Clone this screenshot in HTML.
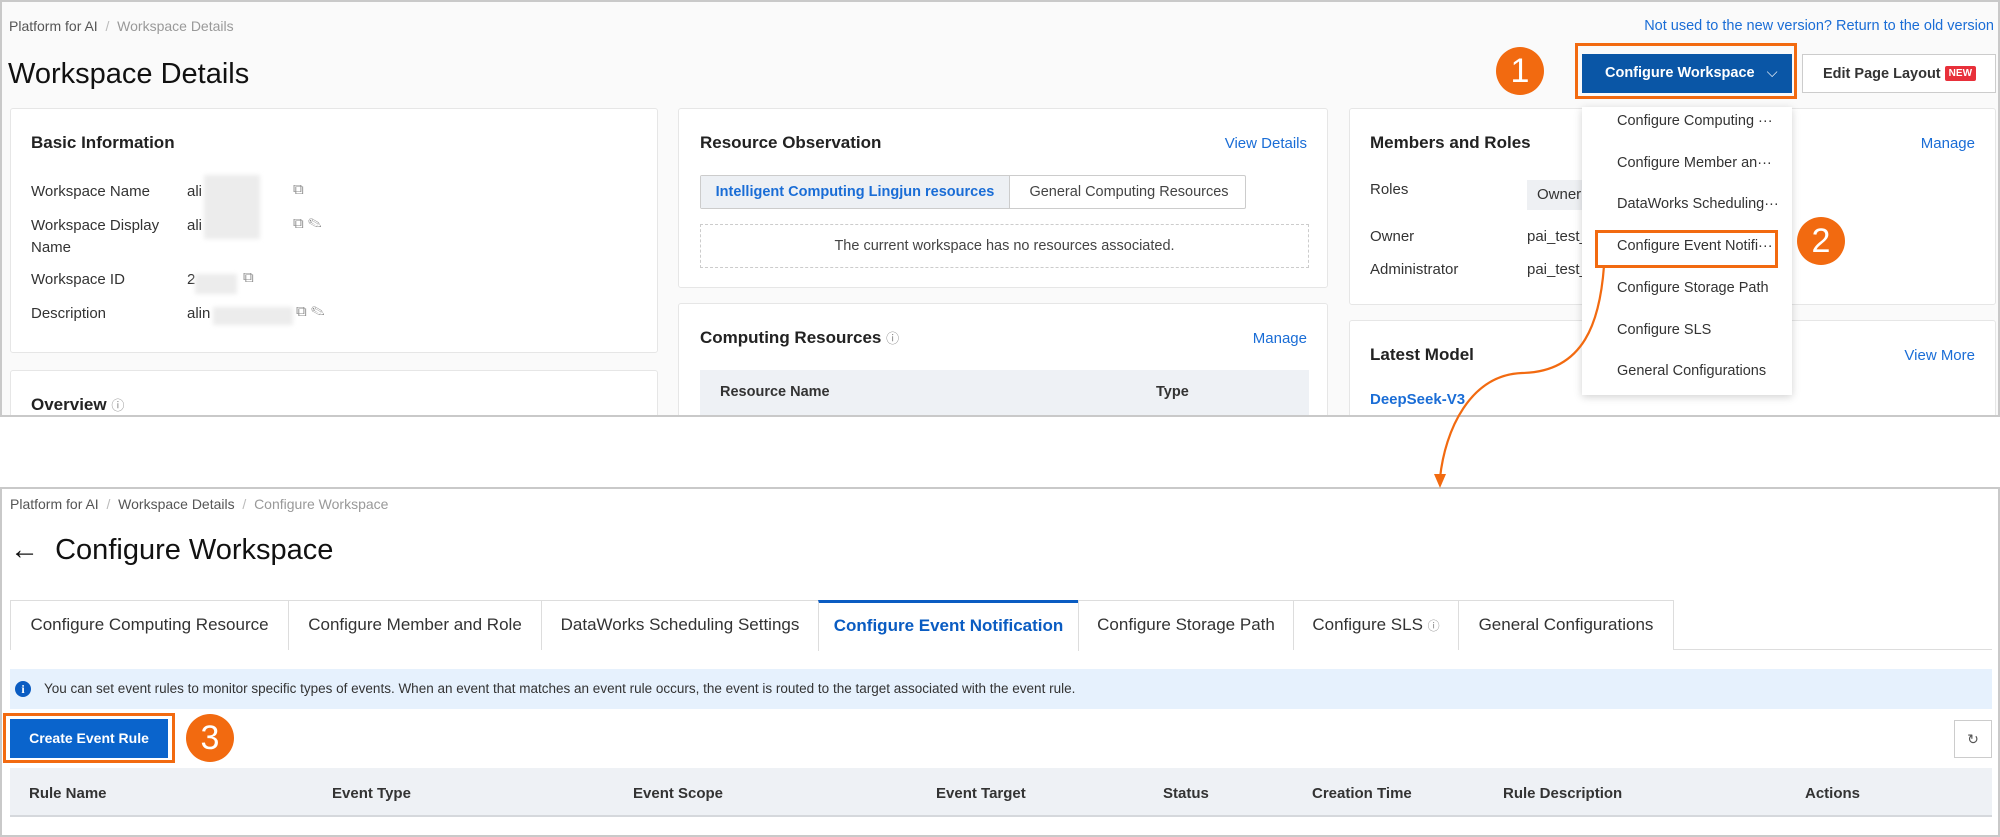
<!DOCTYPE html>
<html><head><meta charset="utf-8"><style>
*{box-sizing:border-box;margin:0;padding:0}
body{width:2000px;height:837px;background:#fff;font-family:"Liberation Sans",sans-serif;color:#333;position:relative;overflow:hidden;font-size:15px}
.a{position:absolute;white-space:nowrap}
.panel{position:absolute;border:2px solid #c9c9c9;background:#fafafa;overflow:hidden}
.card{position:absolute;background:#fff;border:1px solid #e6e6e6;border-radius:3px}
.t{font-size:17px;color:#222;font-weight:bold}
.lnk{color:#1a6dd6}
.blur{position:absolute;background:#ececec;filter:blur(2px)}
.circ{position:absolute;width:48px;height:48px;border-radius:50%;background:#f26a10;color:#fff;font-size:34px;text-align:center;line-height:48px}
.tab{position:absolute;top:600px;height:50px;border:1px solid #ddd;border-bottom:none;background:#fff;font-size:17px;line-height:48px;text-align:center;color:#333}
.th{position:absolute;top:785px;font-size:15px;color:#333;font-weight:bold}
.dd{position:absolute;left:1615px;font-size:14.5px;color:#333}
</style></head><body>

<div class="panel" style="left:0;top:0;width:2000px;height:417px">
 <div class="a" style="left:7px;top:16px;font-size:14px;color:#555">Platform for AI <span style="color:#bbb">&nbsp;/&nbsp;</span> <span style="color:#999">Workspace Details</span></div>
 <div class="a" style="left:6px;top:56px;font-size:29px;color:#111">Workspace Details</div>
 <div class="a lnk" style="right:4px;top:16px;font-size:14.5px">Not used to the new version? Return to the old version</div>

 <div class="card" style="left:8px;top:106px;width:648px;height:245px">
  <div class="a t" style="left:20px;top:24px">Basic Information</div>
  <div class="a" style="left:20px;top:74px">Workspace Name</div>
  <div class="a" style="left:20px;top:108px">Workspace Display</div>
  <div class="a" style="left:20px;top:130px">Name</div>
  <div class="a" style="left:20px;top:162px">Workspace ID</div>
  <div class="a" style="left:20px;top:196px">Description</div>
  <div class="a" style="left:176px;top:74px">ali</div>
  <div class="a" style="left:176px;top:108px">ali</div>
  <div class="a" style="left:176px;top:162px">2</div>
  <div class="a" style="left:176px;top:196px">alin</div>
  <div class="blur" style="left:193px;top:66px;width:56px;height:64px"></div>
  <div class="blur" style="left:184px;top:165px;width:42px;height:20px"></div>
  <div class="blur" style="left:202px;top:198px;width:80px;height:18px"></div>
  <div class="a" style="left:282px;top:72px;color:#888">⧉</div>
  <div class="a" style="left:282px;top:106px;color:#888">⧉ ✎</div>
  <div class="a" style="left:232px;top:160px;color:#888">⧉</div>
  <div class="a" style="left:285px;top:194px;color:#888">⧉ ✎</div>
 </div>
 <div class="card" style="left:8px;top:368px;width:648px;height:80px">
  <div class="a t" style="left:20px;top:24px">Overview <span style="font-weight:normal;font-size:13px;color:#888">ⓘ</span></div>
 </div>

 <div class="card" style="left:676px;top:106px;width:650px;height:180px">
  <div class="a t" style="left:21px;top:24px">Resource Observation</div>
  <div class="a lnk" style="right:20px;top:26px">View Details</div>
  <div class="a" style="left:21px;top:66px;width:546px;height:34px;border:1px solid #ccc;border-radius:2px;background:#fff">
   <div class="a" style="left:0;top:0;width:309px;height:32px;background:#edf0f4;border-right:1px solid #ccc;color:#1a6dd6;font-weight:bold;line-height:32px;text-align:center;font-size:14.5px">Intelligent Computing Lingjun resources</div>
   <div class="a" style="left:310px;top:0;width:236px;height:32px;line-height:32px;text-align:center;color:#444;font-size:14.5px">General Computing Resources</div>
  </div>
  <div class="a" style="left:21px;top:115px;width:609px;height:44px;border:1px dashed #ccc;text-align:center;line-height:42px;color:#444;font-size:14.5px">The current workspace has no resources associated.</div>
 </div>
 <div class="card" style="left:676px;top:301px;width:650px;height:140px">
  <div class="a t" style="left:21px;top:24px">Computing Resources <span style="font-weight:normal;font-size:13px;color:#888">ⓘ</span></div>
  <div class="a lnk" style="right:20px;top:26px">Manage</div>
  <div class="a" style="left:21px;top:66px;width:609px;height:46px;background:#eef1f5;border-bottom:1px solid #ccc"></div>
  <div class="a" style="left:41px;top:80px;font-weight:bold;font-size:14.5px">Resource Name</div>
  <div class="a" style="left:477px;top:80px;font-weight:bold;font-size:14.5px">Type</div>
 </div>

 <div class="card" style="left:1347px;top:106px;width:647px;height:197px">
  <div class="a t" style="left:20px;top:24px">Members and Roles</div>
  <div class="a lnk" style="right:20px;top:26px">Manage</div>
  <div class="a" style="left:20px;top:72px">Roles</div>
  <div class="a" style="left:177px;top:71px;width:80px;height:30px;background:#eef0f3;line-height:30px;padding-left:10px">Owner</div>
  <div class="a" style="left:20px;top:119px">Owner</div>
  <div class="a" style="left:177px;top:119px">pai_test_</div>
  <div class="a" style="left:20px;top:152px">Administrator</div>
  <div class="a" style="left:177px;top:152px">pai_test_</div>
 </div>
 <div class="card" style="left:1347px;top:318px;width:647px;height:140px">
  <div class="a t" style="left:20px;top:24px">Latest Model</div>
  <div class="a lnk" style="right:20px;top:26px">View More</div>
  <div class="a lnk" style="left:20px;top:70px;font-weight:bold">DeepSeek-V3</div>
 </div>

 <div class="circ" style="left:1494px;top:45px">1</div>
 <div class="a" style="left:1573px;top:41px;width:222px;height:56px;border:3px solid #f26a10"></div>
 <div class="a" style="left:1580px;top:52px;width:210px;height:39px;background:#0a56a6;color:#fff;font-weight:bold;font-size:14.5px;line-height:39px;padding-left:23px">Configure Workspace <span style="margin-left:8px;font-weight:normal">⌵</span></div>
 <div class="a" style="left:1800px;top:52px;width:194px;height:39px;border:1px solid #ccc;background:#fff;font-size:14.5px;line-height:37px;padding-left:20px;font-weight:bold;color:#333">Edit Page Layout <span style="background:#e8303a;color:#fff;font-size:10px;padding:2px 4px;border-radius:2px;vertical-align:2px">NEW</span></div>

 <div class="a" style="left:1580px;top:105px;width:210px;height:288px;background:#fff;box-shadow:0 2px 8px rgba(0,0,0,.18)"></div>
 <div class="dd" style="top:111px">Configure Computing ···</div>
 <div class="dd" style="top:153px">Configure Member an···</div>
 <div class="dd" style="top:194px">DataWorks Scheduling···</div>
 <div class="dd" style="top:236px">Configure Event Notifi···</div>
 <div class="dd" style="top:278px">Configure Storage Path</div>
 <div class="dd" style="top:320px">Configure SLS</div>
 <div class="dd" style="top:361px">General Configurations</div>
 <div class="a" style="left:1593px;top:228px;width:183px;height:38px;border:3px solid #f26a10"></div>
 <div class="circ" style="left:1795px;top:215px">2</div>
</div>

<div class="panel" style="left:0;top:487px;width:2000px;height:350px;background:#fff">
 <div class="a" style="left:8px;top:7px;font-size:14px;color:#555">Platform for AI <span style="color:#bbb">&nbsp;/&nbsp;</span> Workspace Details <span style="color:#bbb">&nbsp;/&nbsp;</span> <span style="color:#999">Configure Workspace</span></div>
 <div class="a" style="left:8px;top:45px;font-size:29px;color:#111">←&nbsp; Configure Workspace</div>
</div>
<div class="a" style="left:10px;top:649px;width:1982px;border-top:1px solid #ddd"></div>
<div class="tab" style="left:10px;width:279px">Configure Computing Resource</div>
<div class="tab" style="left:288px;width:254px">Configure Member and Role</div>
<div class="tab" style="left:541px;width:278px">DataWorks Scheduling Settings</div>
<div class="tab" style="left:818px;width:261px;height:51px;border-top:3px solid #0a5cc2;color:#0a5cc2;font-weight:bold;line-height:46px">Configure Event Notification</div>
<div class="tab" style="left:1078px;width:216px">Configure Storage Path</div>
<div class="tab" style="left:1293px;width:166px">Configure SLS <span style="font-size:12px;color:#888">ⓘ</span></div>
<div class="tab" style="left:1458px;width:216px">General Configurations</div>

<div class="a" style="left:10px;top:669px;width:1982px;height:40px;background:#e6f1fd;font-size:13.5px;line-height:40px;padding-left:34px;color:#333">You can set event rules to monitor specific types of events. When an event that matches an event rule occurs, the event is routed to the target associated with the event rule.</div>
<div class="a" style="left:15px;top:681px;width:16px;height:16px;border-radius:50%;background:#0a5cc2;color:#fff;font-size:12px;font-weight:bold;text-align:center;line-height:16px;font-family:'Liberation Serif',serif">i</div>

<div class="a" style="left:3px;top:713px;width:172px;height:50px;border:3px solid #f26a10"></div>
<div class="a" style="left:10px;top:719px;width:158px;height:39px;background:#0a64cc;color:#fff;font-weight:bold;font-size:14px;line-height:39px;text-align:center">Create Event Rule</div>
<div class="circ" style="left:186px;top:714px">3</div>
<div class="a" style="left:1954px;top:720px;width:38px;height:38px;border:1px solid #ccc;background:#fff;text-align:center;line-height:36px;font-size:14px;color:#555">↻</div>

<div class="a" style="left:10px;top:768px;width:1982px;height:49px;background:#eef1f5;border-bottom:2px solid #d5d8dc"></div>
<div class="th" style="left:29px">Rule Name</div>
<div class="th" style="left:332px">Event Type</div>
<div class="th" style="left:633px">Event Scope</div>
<div class="th" style="left:936px">Event Target</div>
<div class="th" style="left:1163px">Status</div>
<div class="th" style="left:1312px">Creation Time</div>
<div class="th" style="left:1503px">Rule Description</div>
<div class="th" style="left:1805px">Actions</div>

<svg class="a" style="left:0;top:0" width="2000" height="837">
 <path d="M1604 266 C1600 320 1585 372 1522 373 C1470 375 1445 430 1440 478" fill="none" stroke="#f26a10" stroke-width="2.2"/>
 <path d="M1434 474 L1440 488 L1446 474 Z" fill="#f26a10"/>
</svg>
</body></html>
